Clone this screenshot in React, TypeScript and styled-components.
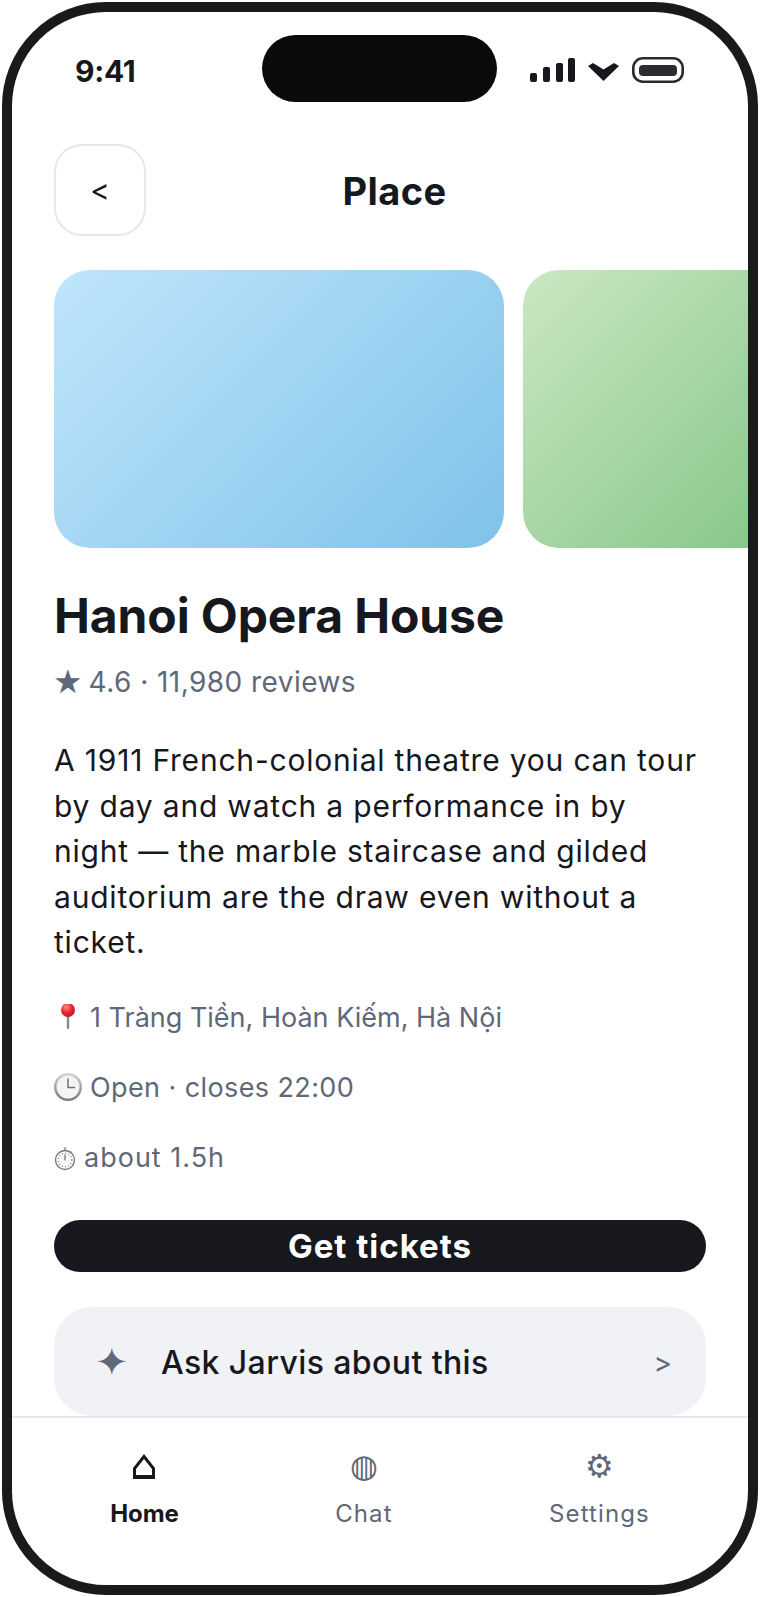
import React from "react";
import styled, { createGlobalStyle } from "styled-components";

const Global = createGlobalStyle`
  html, body { margin: 0; padding: 0; background: #fff; }
  body { font-family: Inter, "Liberation Sans", sans-serif; color: #16181d; }
  * { box-sizing: border-box; }
`;

const Phone = styled.div`
  width: 756px;
  height: 1593px;
  margin: 2px;
  border: 10px solid #1a1a1c;
  border-radius: 104px;
  overflow: hidden;
  background: #fff;
  position: relative;
  display: flex;
  flex-direction: column;
`;

const Island = styled.div`
  position: absolute;
  top: 23px;
  left: 250px;
  width: 235px;
  height: 67px;
  border-radius: 34px;
  background: #0a0a0a;
`;

const StatusBar = styled.div`
  height: 118px;
  flex: none;
  padding: 0 64px 0 63px;
  display: flex;
  align-items: center;
  justify-content: space-between;
`;

const Time = styled.span`
  font-size: 30px;
  font-weight: 700;
  letter-spacing: -0.3px;
`;

const StatusIcons = styled.svg`
  display: block;
`;

const Header = styled.div`
  flex: none;
  margin: 14px 42px 34px;
  display: flex;
  align-items: center;
  position: relative;
  justify-content: center;
`;

const BackButton = styled.button`
  position: absolute;
  left: 0;
  top: 0;
  width: 92px;
  height: 92px;
  border: 2px solid #e5e7ec;
  border-radius: 28px;
  background: #fff;
  color: #16181d;
  font-family: Inter, sans-serif;
  font-size: 30px;
  padding: 0;
`;

const HeaderTitle = styled.h1`
  margin: 0 0 0 29px;
  height: 92px;
  line-height: 94px;
  font-size: 38px;
  font-weight: 700;
  letter-spacing: 0.4px;
`;

const Content = styled.div`
  flex: 1;
  min-height: 0;
  overflow: hidden;
  padding-left: 42px;
`;

const Carousel = styled.div`
  display: flex;
  gap: 19px;
  overflow: hidden;
`;

const Hero = styled.div<{ $from: string; $to: string }>`
  flex: none;
  width: 450px;
  height: 278px;
  border-radius: 36px;
  background: linear-gradient(135deg, ${(p) => p.$from}, ${(p) => p.$to});
`;

const Body = styled.div`
  width: 652px;
`;

const Title = styled.h2`
  margin: 36px 0 0;
  font-size: 48px;
  line-height: 64px;
  font-weight: 700;
  letter-spacing: -0.1px;
`;

const Rating = styled.div`
  display: flex;
  align-items: center;
  gap: 6px;
  margin-top: 16px;
  font-size: 28px;
  line-height: 36px;
  letter-spacing: 0.45px;
  color: #5f6878;
`;

const Star = styled.span`
  font-family: "DejaVu Sans", sans-serif;
  font-size: 33px;
  letter-spacing: 0;
  margin-left: -1px;
`;

const Description = styled.p`
  margin: 38px 0 0;
  font-size: 30px;
  line-height: 45.6px;
  letter-spacing: 0.8px;
`;

const Meta = styled.div<{ $tracking: number }>`
  display: flex;
  align-items: center;
  gap: 8px;
  font-size: 27px;
  line-height: 36px;
  letter-spacing: ${(p) => p.$tracking}px;
  color: #5f6878;
  margin-top: 34px;
`;

const MetaIcon = styled.svg`
  display: block;
  flex: none;
`;

const PrimaryButton = styled.button`
  display: block;
  width: 100%;
  height: 52px;
  margin-top: 44px;
  border: 0;
  border-radius: 26px;
  background: #16181d;
  color: #fff;
  font-family: Inter, sans-serif;
  font-size: 33px;
  font-weight: 700;
  letter-spacing: 1px;
  padding: 0;
`;

const AskCard = styled.div`
  margin-top: 35px;
  height: 109px;
  border-radius: 38px;
  background: #f0f2f6;
  display: flex;
  align-items: center;
  padding: 0 34px 0 41px;
`;

const Sparkle = styled.span`
  font-family: "DejaVu Sans", sans-serif;
  font-size: 40px;
  line-height: 48px;
  color: #5f6878;
  width: 66px;
  flex: none;
  margin-top: 2px;
`;

const AskLabel = styled.span`
  flex: 1;
  font-size: 32px;
  font-weight: 500;
  letter-spacing: 0.4px;
  margin-top: 2px;
`;

const Chevron = styled.span`
  font-size: 28px;
  color: #5f6878;
  margin-top: 4px;
`;

const TabBar = styled.nav`
  flex: none;
  height: 169px;
  border-top: 2px solid #e5e7ec;
  padding: 30px 20px 0;
  display: flex;
  align-items: flex-start;
  justify-content: space-around;
`;

const Tab = styled.div`
  display: flex;
  flex-direction: column;
  align-items: center;
`;

const TabIcon = styled.span`
  font-family: "DejaVu Sans", sans-serif;
  font-size: 32px;
  line-height: 36px;
  height: 36px;
  color: #5f6878;
`;

const HomeIcon = styled.svg`
  display: block;
  margin-top: 6px;
  height: 30px;
`;

const TabLabel = styled.span<{ $active?: boolean }>`
  margin-top: 14px;
  font-size: 24px;
  line-height: 32px;
  font-weight: ${(p) => (p.$active ? 700 : 400)};
  letter-spacing: ${(p) => (p.$active ? "-0.1px" : "1.1px")};
  color: ${(p) => (p.$active ? "#16181d" : "#5f6878")};
`;

export default function App() {
  return (
    <>
      <Global />
      <Phone>
        <Island />
        <StatusBar>
          <Time>9:41</Time>
          <StatusIcons width="156" height="28" viewBox="0 0 156 28">
            <rect x="2" y="16" width="7" height="9" rx="2" fill="#16181d" />
            <rect x="15" y="10" width="7" height="15" rx="2" fill="#16181d" />
            <rect x="28" y="6" width="7" height="19" rx="2" fill="#16181d" />
            <rect x="40" y="1" width="7" height="24" rx="2" fill="#16181d" />
            <path d="M60 9l5-3 10.500 6.500L86 6l5 3-15.500 15z" fill="#16181d" />
            <rect x="105.300" y="1.300" width="49.400" height="23.400" rx="9.500" fill="none" stroke="#2b2c30" strokeWidth="2.600" />
            <rect x="111" y="8" width="38" height="11" rx="4" fill="#2b2c30" />
          </StatusIcons>
        </StatusBar>
        <Header>
          <BackButton>&lt;</BackButton>
          <HeaderTitle>Place</HeaderTitle>
        </Header>
        <Content>
          <Carousel>
            <Hero $from="#bfe5fc" $to="#7fc2e8" />
            <Hero $from="#cbe7c3" $to="#6aba70" />
          </Carousel>
          <Body>
            <Title>Hanoi Opera House</Title>
            <Rating><Star>★</Star> 4.6 · 11,980 reviews</Rating>
            <Description>
              A 1911 French-colonial theatre you can tour by day and watch a performance in by night — the marble staircase and gilded auditorium are the draw even without a ticket.
            </Description>
            <Meta $tracking={0}>
              <MetaIcon width="28" height="28" viewBox="0 2 28 28">
                <defs>
                  <radialGradient id="pinBall" cx="0.38" cy="0.3" r="0.8">
                    <stop offset="0" stopColor="#ff8f8f" />
                    <stop offset="0.45" stopColor="#ee2b32" />
                    <stop offset="1" stopColor="#b5121b" />
                  </radialGradient>
                </defs>
                <rect x="12.800" y="12" width="2.400" height="15" rx="1" fill="#8d8a86" />
                <circle cx="14" cy="8" r="7" fill="url(#pinBall)" />
              </MetaIcon>
              1 Tràng Tiền, Hoàn Kiếm, Hà Nội
            </Meta>
            <Meta $tracking={0.4}>
              <MetaIcon width="28" height="30" viewBox="0 1 28 30">
                <defs>
                  <linearGradient id="clockRim" x1="0" y1="0" x2="0" y2="1">
                    <stop offset="0" stopColor="#d4d4d6" />
                    <stop offset="1" stopColor="#77777b" />
                  </linearGradient>
                </defs>
                <circle cx="14" cy="15" r="14" fill="url(#clockRim)" />
                <circle cx="14" cy="15" r="11.500" fill="#f4f4f4" />
                <path d="M14 6.500V15.500H21" fill="none" stroke="#6d7078" strokeWidth="1.500" />
              </MetaIcon>
              Open · closes 22:00
            </Meta>
            <Meta $tracking={1}>
              <MetaIcon width="22" height="30" viewBox="0 0 22 30">
                <path d="M9.500 5h3M11 5v3M17.500 8.500l-1 1" fill="none" stroke="#8a8a8e" strokeWidth="1.200" />
                <circle cx="11" cy="17" r="9.500" fill="#fbfbfb" stroke="#77777b" strokeWidth="1.300" />
                <circle cx="11" cy="17" r="6.800" fill="none" stroke="#8a8a8e" strokeWidth="1.400" strokeDasharray="1 2.200" />
                <path d="M11 11.500V17.500" stroke="#55565c" strokeWidth="1.100" />
              </MetaIcon>
              about 1.5h
            </Meta>
            <PrimaryButton>Get tickets</PrimaryButton>
            <AskCard>
              <Sparkle>✦</Sparkle>
              <AskLabel>Ask Jarvis about this</AskLabel>
              <Chevron>&gt;</Chevron>
            </AskCard>
          </Body>
        </Content>
        <TabBar>
          <Tab>
            <HomeIcon width="22" viewBox="0 0 22 30" fill="#16181d">
              <path fillRule="evenodd" d="M11 0L22 14V25H0V14ZM11 5L3 15V21H19V15Z" />
            </HomeIcon>
            <TabLabel $active>Home</TabLabel>
          </Tab>
          <Tab><TabIcon>◍</TabIcon><TabLabel>Chat</TabLabel></Tab>
          <Tab><TabIcon>⚙</TabIcon><TabLabel>Settings</TabLabel></Tab>
        </TabBar>
      </Phone>
    </>
  );
}
